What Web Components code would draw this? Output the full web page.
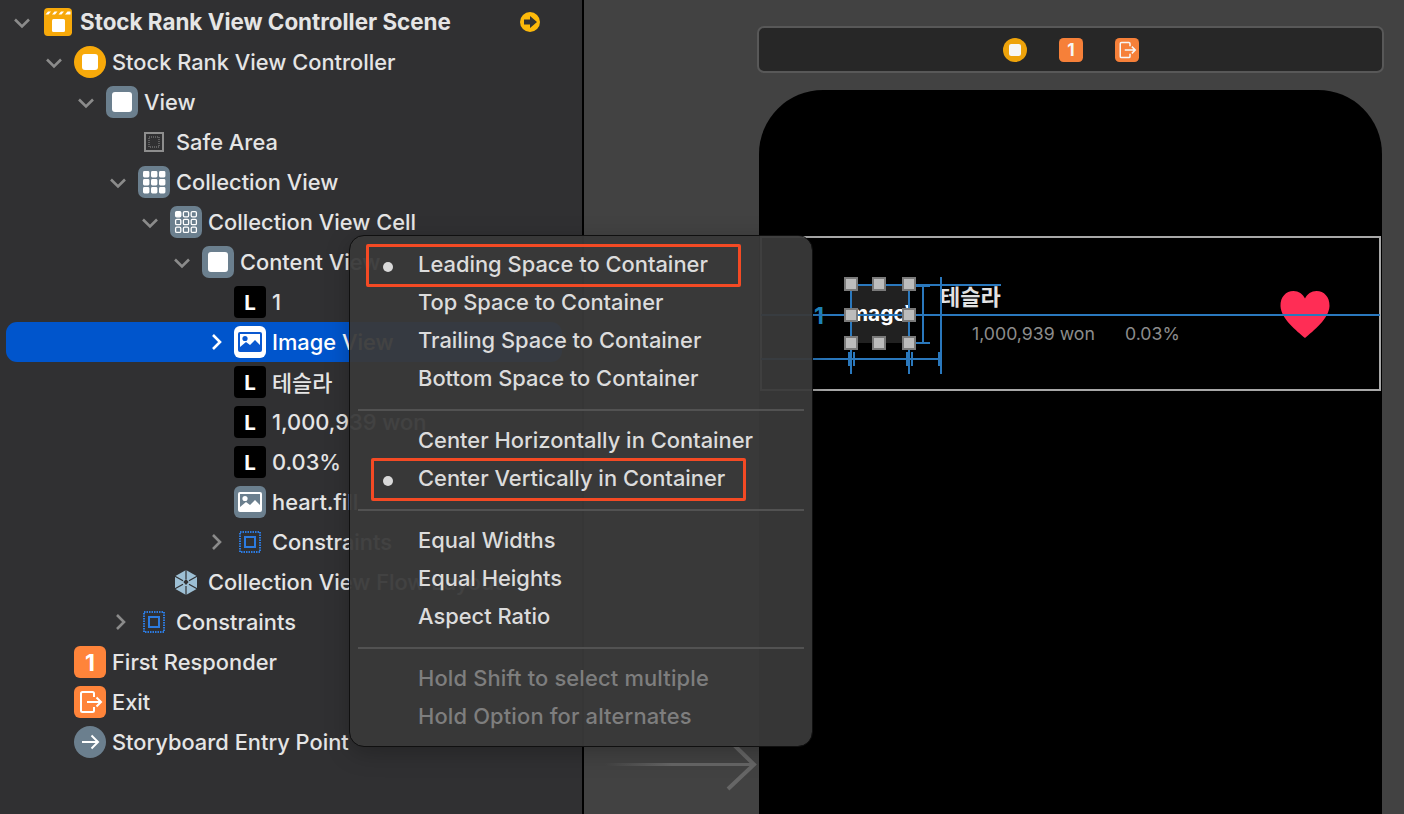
<!DOCTYPE html>
<html lang="en">
<head>
<meta charset="utf-8">
<title>Storyboard</title>
<style>
  html, body { margin: 0; height: 100%; background: #303032; overflow: hidden; }
  body { font-family: Inter, "Noto Sans CJK KR", sans-serif; }
</style>
</head>
<body>
<xc-app>
  <xc-outline slot="outline">
    <xc-row level="0" open icon="scene" strong jump>Stock Rank View Controller Scene</xc-row>
    <xc-row level="1" open icon="vc">Stock Rank View Controller</xc-row>
    <xc-row level="2" open icon="view">View</xc-row>
    <xc-row level="3" icon="safe">Safe Area</xc-row>
    <xc-row level="3" open icon="grid">Collection View</xc-row>
    <xc-row level="4" open icon="cell">Collection View Cell</xc-row>
    <xc-row level="5" open icon="view">Content View</xc-row>
    <xc-row level="6" icon="label">1</xc-row>
    <xc-row level="6" closed icon="image" selected>Image View</xc-row>
    <xc-row level="6" icon="label">테슬라</xc-row>
    <xc-row level="6" icon="label">1,000,939 won</xc-row>
    <xc-row level="6" icon="label">0.03%</xc-row>
    <xc-row level="6" icon="image">heart.fill</xc-row>
    <xc-row level="6" closed icon="constraints">Constraints</xc-row>
    <xc-row level="4" icon="flow">Collection View Flow Layout</xc-row>
    <xc-row level="3" closed icon="constraints">Constraints</xc-row>
    <xc-row level="1" icon="responder">First Responder</xc-row>
    <xc-row level="1" icon="exit">Exit</xc-row>
    <xc-row level="1" icon="entry">Storyboard Entry Point</xc-row>
  </xc-outline>
  <xc-canvas slot="canvas"></xc-canvas>
  <xc-menu slot="overlay">
    <xc-menu-item marked>Leading Space to Container</xc-menu-item>
    <xc-menu-item>Top Space to Container</xc-menu-item>
    <xc-menu-item>Trailing Space to Container</xc-menu-item>
    <xc-menu-item>Bottom Space to Container</xc-menu-item>
    <xc-menu-sep></xc-menu-sep>
    <xc-menu-item>Center Horizontally in Container</xc-menu-item>
    <xc-menu-item marked>Center Vertically in Container</xc-menu-item>
    <xc-menu-sep></xc-menu-sep>
    <xc-menu-item>Equal Widths</xc-menu-item>
    <xc-menu-item>Equal Heights</xc-menu-item>
    <xc-menu-item>Aspect Ratio</xc-menu-item>
    <xc-menu-sep></xc-menu-sep>
    <xc-menu-item disabled>Hold Shift to select multiple</xc-menu-item>
    <xc-menu-item disabled>Hold Option for alternates</xc-menu-item>
  </xc-menu>
  <xc-callout slot="overlay" style="left:366px;top:244px;width:375px;height:43px"></xc-callout>
  <xc-callout slot="overlay" style="left:371px;top:458px;width:375px;height:43px"></xc-callout>
</xc-app>

<script>
const BLUE_GREY = '#6b7f8e';
const ORANGE = '#ff843a';
const YELLOW = '#f7a90a';

const pictureGlyph = (fg, bg) => `
  <rect x="4" y="6" width="24" height="20" rx="2" fill="${fg}"/>
  <rect x="6" y="8" width="20" height="16" fill="${bg}"/>
  <circle cx="11" cy="12.5" r="2.6" fill="${fg}"/>
  <path d="M6 24v-3l6-5 4 3 5-5 5 5v5z" fill="${fg}"/>`;

const gridGlyph = () => {
  let out = '';
  for (let y = 0; y < 3; y++) for (let x = 0; x < 3; x++) {
    out += `<rect x="${5 + x * 8}" y="${5 + y * 8}" width="6.4" height="6.4" rx="1.4" fill="#fff"/>`;
  }
  return out;
};

const cellGlyph = () => {
  let out = '';
  for (let y = 0; y < 3; y++) for (let x = 0; x < 3; x++) {
    const first = x === 0 && y === 0;
    out += `<rect x="${5.6 + x * 7.8}" y="${5.6 + y * 7.8}" width="5.2" height="5.2" rx="1.2" fill="${first ? '#fff' : 'none'}" stroke="#fff" stroke-width="1.3"/>`;
  }
  return out;
};

const ICONS = {
  scene: `<g transform="scale(1.143)">
      <rect width="28" height="28" rx="4" fill="${YELLOW}"/>
      <path d="M1.500 6.500l2.500-3h3l-2.500 3zM8 6.500l2.500-3h3l-2.500 3zM14.500 6.500l2.500-3h3l-2.500 3zM21 6.500l2.500-3h3v3z" fill="#fff"/>
      <rect x="8" y="11" width="13" height="13" rx="1.500" fill="#fff"/></g>`,
  vc: `<circle cx="16" cy="16" r="16" fill="${YELLOW}"/><rect x="8" y="8" width="16" height="16" rx="3" fill="#fff"/>`,
  view: `<rect width="32" height="32" rx="7" fill="${BLUE_GREY}"/><rect x="6" y="6" width="20" height="20" rx="3" fill="#fff"/>`,
  safe: `<rect x="7" y="7" width="18" height="18" fill="none" stroke="#8e8e8e" stroke-width="2"/>
      <rect x="11" y="11" width="10" height="10" fill="none" stroke="#8e8e8e" stroke-width="1" stroke-dasharray="1 1"/>`,
  grid: `<rect width="32" height="32" rx="7" fill="${BLUE_GREY}"/>${gridGlyph()}`,
  cell: `<rect width="32" height="32" rx="7" fill="${BLUE_GREY}"/>${cellGlyph()}`,
  label: `<rect width="32" height="32" rx="4" fill="#000"/><text x="16" y="24" text-anchor="middle" font-family="Inter, sans-serif" font-size="20.500" font-weight="700" fill="#fff">L</text>`,
  image: `<rect width="32" height="32" rx="6" fill="${BLUE_GREY}"/>${pictureGlyph('#fff', BLUE_GREY)}`,
  'image-selected': `<rect width="32" height="32" rx="6" fill="#fff"/>${pictureGlyph('#0a58d0', '#fff')}`,
  constraints: `<rect x="6" y="6" width="20" height="20" fill="none" stroke="#2c7be0" stroke-width="2" stroke-dasharray="1.500 1"/>
      <rect x="11" y="11" width="10" height="10" fill="none" stroke="#2c7be0" stroke-width="2"/>`,
  flow: `<path d="M16 4l11 6.300v12.400L16 29 5 22.700V10.300z" fill="#9dbfd4"/>
      <path d="M16 4v9M16 20v9M5 10.300l8 4.500M27 10.300l-8 4.500M5 22.700l8-4.500M27 22.700l-8-4.500" stroke="#303032" stroke-width="1.200"/>
      <path d="M16 13l2.600 3-2.600 3-2.600-3z" fill="#303032"/>`,
  responder: `<rect width="32" height="32" rx="6" fill="${ORANGE}"/><text x="16" y="24.500" text-anchor="middle" font-family="Inter, sans-serif" font-size="23" font-weight="700" fill="#fff">1</text>`,
  exit: `<rect width="32" height="32" rx="6" fill="${ORANGE}"/>
      <path d="M20 11V7.500A1.500 1.500 0 0 0 18.500 6h-10A1.500 1.500 0 0 0 7 7.500v17A1.500 1.500 0 0 0 8.500 26h10a1.500 1.500 0 0 0 1.500-1.500V21" fill="none" stroke="#fff" stroke-width="2"/>
      <path d="M13 16h14M22.500 11.500L27 16l-4.500 4.500" fill="none" stroke="#fff" stroke-width="2"/>`,
  entry: `<circle cx="16" cy="16" r="16" fill="${BLUE_GREY}"/>
      <path d="M8 16h16M17.500 9.500L24 16l-6.500 6.500" fill="none" stroke="#fff" stroke-width="2"/>`
};

class XcIcon extends HTMLElement {
  connectedCallback() {
    const size = this.getAttribute('size') || 32;
    this.attachShadow({ mode: 'open' }).innerHTML = `
      <style>
        :host { display: block; width: ${size}px; height: ${size}px; }
        svg { display: block; width: 100%; height: 100%; }
      </style>
      <svg viewBox="0 0 32 32">${ICONS[this.getAttribute('name')] || ''}</svg>`;
  }
}

class XcApp extends HTMLElement {
  constructor() {
    super();
    this.attachShadow({ mode: 'open' }).innerHTML = `
      <style>
        :host { display: flex; position: relative; width: 1404px; height: 814px; overflow: hidden; }
        ::slotted([slot=outline]) { flex: 0 0 582px; }
        ::slotted([slot=canvas]) { flex: 1; }
        .divider { flex: 0 0 2px; background: #000; }
      </style>
      <slot name="outline"></slot>
      <div class="divider"></div>
      <slot name="canvas"></slot>
      <slot name="overlay"></slot>`;
  }
}

class XcOutline extends HTMLElement {
  constructor() {
    super();
    this.attachShadow({ mode: 'open' }).innerHTML = `
      <style>
        :host { display: block; background: #303032; padding-top: 2px; box-sizing: border-box; }
      </style>
      <slot></slot>`;
  }
}

class XcRow extends HTMLElement {
  connectedCallback() {
    const level = +this.getAttribute('level');
    const selected = this.hasAttribute('selected');
    const name = this.getAttribute('icon');
    const iconName = selected ? name + '-selected' : name;
    let chevron = '';
    if (this.hasAttribute('open')) chevron = '<path d="M9 13.500l7 7 7-7"/>';
    if (this.hasAttribute('closed')) chevron = '<path d="M15 9l7 7-7 7"/>';
    const iconSize = level === 0 ? 28 : 32;
    this.attachShadow({ mode: 'open' }).innerHTML = `
      <style>
        :host { display: block; }
        .row {
          display: flex; align-items: center; height: 40px; margin: 0 20px 0 6px;
          padding-left: ${level * 32}px; border-radius: 11px; white-space: nowrap;
          color: #e5e5e5; font-size: 21.850px; font-weight: 500; position: relative;
        }
        :host([selected]) .row { background: #0055cc; color: #fff; }
        :host([strong]) .row { font-weight: 700; font-size: 22.400px; }
        .chev { flex: 0 0 32px; height: 32px; margin-right: 4px; fill: none; stroke: #8b8b8b; stroke-width: 2.600; }
        :host([selected]) .chev { stroke: #fff; }
        .slot { flex: 0 0 32px; display: flex; justify-content: center; }
        .label { margin-left: 6px; margin-bottom: 1px; }
        .jump { position: absolute; left: 514px; top: 10px; width: 20px; height: 20px; }
      </style>
      <div class="row">
        <svg class="chev" viewBox="0 0 32 32">${chevron}</svg>
        <div class="slot"><xc-icon name="${iconName}" size="${iconSize}"></xc-icon></div>
        <span class="label"><slot></slot></span>
        ${this.hasAttribute('jump') ? `<svg class="jump" viewBox="0 0 20 20"><circle cx="10" cy="10" r="10" fill="#fdb90a"/><path d="M4 7.500h6V4l7 6-7 6v-3.500H4z" fill="#333"/></svg>` : ''}
      </div>`;
  }
}

class XcMenu extends HTMLElement {
  constructor() {
    super();
    this.attachShadow({ mode: 'open' }).innerHTML = `
      <style>
        :host {
          display: block; position: absolute; left: 350px; top: 236px; width: 462px;
          box-sizing: border-box; padding: 9px 0 11px; border-radius: 14px;
          background: rgba(57, 57, 57, .95); outline: 1px solid #101010;
          box-shadow: 0 6px 24px rgba(0, 0, 0, .25);
        }
      </style>
      <slot></slot>`;
  }
}

class XcMenuItem extends HTMLElement {
  constructor() {
    super();
    this.attachShadow({ mode: 'open' }).innerHTML = `
      <style>
        :host {
          display: flex; align-items: center; height: 38px; padding-left: 68px; position: relative;
          color: #dcdcdc; font-size: 21.900px; font-weight: 500; white-space: nowrap;
        }
        :host([disabled]) { color: #7e7e7e; letter-spacing: .15px; }
        :host([marked])::before {
          content: ""; position: absolute; left: 33px; top: 17px; width: 10px; height: 10px;
          border-radius: 50%; background: #d9d9d9;
        }
      </style>
      <slot></slot>`;
  }
}

class XcMenuSep extends HTMLElement {
  constructor() {
    super();
    this.attachShadow({ mode: 'open' }).innerHTML = `
      <style>
        :host { display: flex; align-items: center; height: 24px; box-sizing: border-box; padding: 2px 8px 0; }
        div { flex: 1; height: 2px; background: #525252; }
      </style>
      <div></div>`;
  }
}

class XcCallout extends HTMLElement {
  constructor() {
    super();
    this.attachShadow({ mode: 'open' }).innerHTML = `
      <style>
        :host {
          display: block; position: absolute; box-sizing: border-box;
          border: 3px solid #f44a24; border-radius: 2px;
        }
      </style>`;
  }
}

class XcCanvas extends HTMLElement {
  constructor() {
    super();
    this.attachShadow({ mode: 'open' }).innerHTML = `
      <style>
        :host {
          display: block; background: #424242; position: relative;
          padding: 26px 21px 0 173px; box-sizing: border-box;
        }
        .bar {
          display: flex; justify-content: center; align-items: center; gap: 32px;
          height: 47px; box-sizing: border-box; margin-right: -1px; margin-left: 0;
          background: #272727; border: 2px solid #585858; border-radius: 7px;
        }
        .bar xc-icon { opacity: .96; }
        .entry { position: absolute; left: 21px; top: 744px; width: 152px; height: 48px; }
      </style>
      <div class="bar">
        <xc-icon name="vc" size="24"></xc-icon>
        <xc-icon name="responder" size="24"></xc-icon>
        <xc-icon name="exit" size="24"></xc-icon>
      </div>
      <xc-phone></xc-phone>
      <svg class="entry" viewBox="0 0 152 48">
        <defs><linearGradient id="g" x1="0" x2="1" y1="0" y2="0">
          <stop offset="0" stop-color="#666" stop-opacity="0"/><stop offset=".45" stop-color="#666"/>
        </linearGradient></defs>
        <rect x="0" y="19" width="148" height="3" fill="url(#g)"/>
        <path d="M127 -1L149 20.500L123 45" fill="none" stroke="#666" stroke-width="4"/>
      </svg>`;
  }
}

class XcPhone extends HTMLElement {
  constructor() {
    super();
    const blue = '#2a78bd';
    const line = (x, y, w, h) => `<i style="left:${x}px;top:${y}px;width:${w}px;height:${h}px"></i>`;
    const handles = [[844, 277], [872, 277], [902, 277], [844, 308], [902, 308], [844, 336], [872, 336], [902, 336]]
      .map(([x, y]) => `<b style="left:${x}px;top:${y}px"></b>`).join('');
    this.attachShadow({ mode: 'open' }).innerHTML = `
      <style>
        :host {
          display: block; margin: 17px 0 0 2px; width: 623px; height: 724px; position: relative;
          background: #000; border-radius: 64px 64px 0 0;
        }
        .cell {
          position: absolute; left: 1px; top: 146px; width: 621px; height: 155px;
          box-sizing: border-box; border: 2px solid #a8a8a8;
        }
        /* the stage shares the screen's coordinates, so the parts read as they were measured */
        .stage { position: absolute; left: -759px; top: -90px; width: 1404px; height: 814px; }
        i { position: absolute; background: ${blue}; display: block; }
        b {
          position: absolute; width: 14px; height: 14px; box-sizing: border-box; display: block;
          background: #bcbcbc; border: 2px solid #7a7a7a;
        }
        .thumb {
          position: absolute; left: 851px; top: 285px; width: 58px; height: 58px; overflow: hidden;
          background: #212121; color: #fff; font: 700 21px/58px Inter, sans-serif; white-space: nowrap;
        }
        .thumb span { display: block; margin-left: -8px; }
        .rank { position: absolute; left: 814px; top: 302px; color: #1f8bc4; font: 700 23px/28px Inter, sans-serif; }
        .name { position: absolute; left: 940px; top: 283px; color: #e2e2e2; font: 600 22px/28px Inter, "Noto Sans CJK KR", sans-serif; }
        .sub { position: absolute; top: 323px; color: #8c8c8c; font: 400 17.700px/22px Inter, sans-serif; white-space: nowrap; }
        .heart { position: absolute; left: 1280px; top: 291px; width: 50px; height: 47px; }
      </style>
      <div class="cell"></div>
      <div class="stage">
        <div class="thumb"><span>ImageView</span></div>
        <div class="rank">1</div>
        <div class="name">테슬라</div>
        <div class="sub" style="left:972px">1,000,939 won</div>
        <div class="sub" style="left:1125px">0.03%</div>
        <svg class="heart" viewBox="0 0 50 47"><path d="M25 47C17 40 1 28 .5 15 .2 6 6 0 13.500 0 18.500 0 23 3 25 7.500 27 3 31.500 0 36.500 0 44 0 49.800 6 49.500 15 49 28 33 40 25 47z" fill="#ff2d55"/></svg>
        ${line(761, 314, 619, 2)}
        ${line(761, 358, 179, 1.5)}
        ${line(851, 284, 150, 2)}
        ${line(850, 277, 1.5, 97)}
        ${line(908, 277, 1.5, 97)}
        ${line(940, 277, 1.5, 97)}
        ${line(922, 286, 2, 57)}
        ${line(916, 285, 14, 2)}
        ${line(909, 342, 21, 2)}
        ${line(848, 352, 1.5, 14)}${line(853, 352, 1.5, 14)}
        ${line(906, 352, 1.5, 14)}${line(911, 352, 1.5, 14)}
        ${line(938, 352, 1.5, 14)}
        ${handles}
      </div>`;
  }
}

customElements.define('xc-icon', XcIcon);
customElements.define('xc-app', XcApp);
customElements.define('xc-outline', XcOutline);
customElements.define('xc-row', XcRow);
customElements.define('xc-menu', XcMenu);
customElements.define('xc-menu-item', XcMenuItem);
customElements.define('xc-menu-sep', XcMenuSep);
customElements.define('xc-callout', XcCallout);
customElements.define('xc-canvas', XcCanvas);
customElements.define('xc-phone', XcPhone);
</script>
</body>
</html>
